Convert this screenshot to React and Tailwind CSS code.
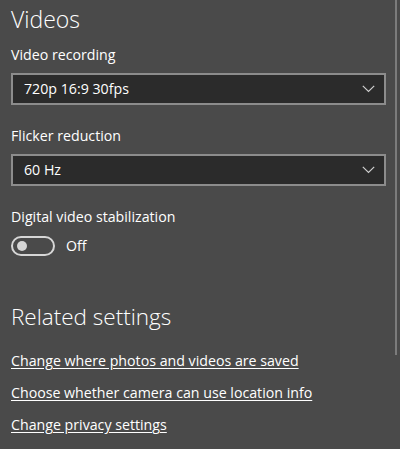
import React from "react";

function Chevron() {
  return (
    <svg width="13" height="8" viewBox="0 0 13 8" className="shrink-0">
      <path d="M0.8 0.8 L6.5 6.5 L12.2 0.8" fill="none" stroke="#cfcfcf" strokeWidth="1.2" />
    </svg>
  );
}

function Select({ value }) {
  return (
    <div className="flex items-center justify-between h-[32px] w-[375px] border-2 border-[#8c8c8c] bg-[#2b2b2b] pl-[11px] pr-[9px]">
      <span className="text-[14.2px] text-white leading-none">{value}</span>
      <Chevron />
    </div>
  );
}

export default function App() {
  return (
    <div
      className="relative w-[400px] h-[449px] overflow-hidden bg-[#4a4a4a] text-white"
      style={{ fontFamily: '"Open Sans", "Noto Sans", sans-serif' }}
    >
      <div className="absolute right-[3px] top-0 w-[2px] h-[355px] bg-[#7c7c7c]" />
      <div className="flex flex-col pl-[11px] pt-[3px]">
        <h1 className="text-[23px] font-light leading-[32px]">Videos</h1>
        <div className="mt-[10px] text-[14.2px] leading-[20px]">Video recording</div>
        <div className="mt-[8px]">
          <Select value="720p 16:9 30fps" />
        </div>
        <div className="mt-[21px] text-[14.2px] leading-[20px]">Flicker reduction</div>
        <div className="mt-[8px]">
          <Select value="60 Hz" />
        </div>
        <div className="mt-[21px] text-[14.2px] leading-[20px]">Digital video stabilization</div>
        <div className="mt-[9px] flex items-center gap-[11px]">
          <div className="w-[44px] h-[20px] rounded-full border-2 border-[#d6d6d6] flex items-center pl-[4px]">
            <div className="w-[10px] h-[10px] rounded-full bg-[#d6d6d6]" />
          </div>
          <span className="text-[14.2px] leading-[20px]">Off</span>
        </div>
        <h2 className="mt-[45px] text-[22.5px] font-light leading-[32px]">Related settings</h2>
        <div className="mt-[18px] flex flex-col gap-[12px] text-[14.2px] leading-[20px]">
          <a className="underline underline-offset-[2px] w-fit">Change where photos and videos are saved</a>
          <a className="underline underline-offset-[2px] w-fit">Choose whether camera can use location info</a>
          <a className="underline underline-offset-[2px] w-fit">Change privacy settings</a>
        </div>
      </div>
    </div>
  );
}
